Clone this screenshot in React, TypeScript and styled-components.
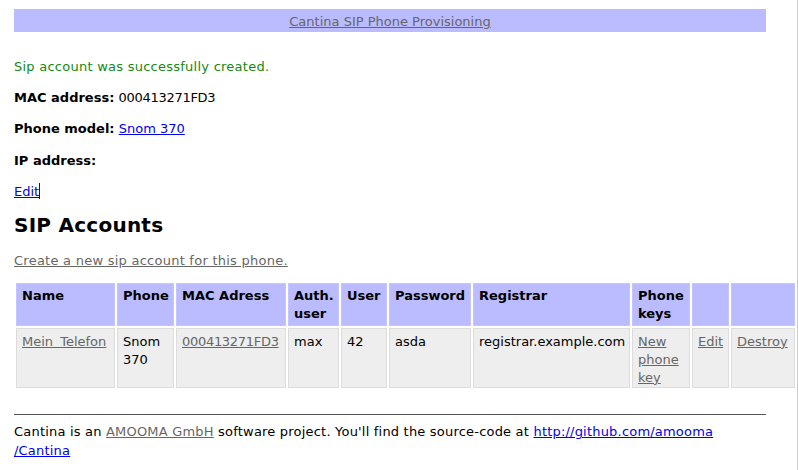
import React from "react";
import styled, { createGlobalStyle } from "styled-components";

const Global = createGlobalStyle`
  html, body { margin: 0; padding: 0; background: #fff; }
  body {
    font-family: "DejaVu Sans", Verdana, sans-serif;
    font-size: 13px;
    line-height: 1.4;
    color: #000;
  }
`;

const Page = styled.div`
  box-sizing: border-box;
  width: 798px;
  min-height: 470px;
  border-right: 1px solid #cccccc;
  padding: 9px 0 0 14px;
`;

const Content = styled.div`
  width: 752px;
`;

const TopBar = styled.div`
  box-sizing: border-box;
  height: 23px;
  padding-top: 4px;
  background: #bbbbff;
  text-align: center;
`;

const GreyLink = styled.a`
  color: #666666;
  text-decoration: underline;
`;

const BlueLink = styled.a`
  color: #0000ee;
  text-decoration: underline;
`;

const Notice = styled.p`
  margin: 26px 0 13px;
  color: #138a13;
  letter-spacing: 0.25px;
`;

const Field = styled.p`
  margin: 13px 0;
`;

const Label = styled.b`
  font-weight: bold;
`;

const Digits = styled.span`
  letter-spacing: -0.28px;
`;

const Caret = styled.span`
  display: inline-block;
  width: 1px;
  height: 16px;
  background: #1a1a40;
  vertical-align: -3px;
`;

const Heading = styled.h2`
  margin: 13px 0 15px;
  font-size: 20px;
  line-height: 23px;
  font-weight: bold;
  letter-spacing: 0.25px;
`;

const Actions = styled.p`
  margin: 0 0 11px;
  letter-spacing: 0.25px;
`;

const Table = styled.table`
  border-collapse: separate;
  border-spacing: 2px;
  table-layout: fixed;
  width: 783px;
  margin: 0;
`;

const Col = styled.col<{ $w: number }>`
  width: ${(p) => p.$w}px;
`;

const Th = styled.th`
  box-sizing: border-box;
  background: #bbbbff;
  border: 1px solid #c4c4ff;
  padding: 3px 5px 1px;
  text-align: left;
  vertical-align: top;
  font-weight: bold;
`;

const Td = styled.td`
  box-sizing: border-box;
  background: #eeeeee;
  border: 1px solid #dddddd;
  padding: 4px 5px 0;
  vertical-align: top;
  height: 60px;
`;

const NameLink = styled(GreyLink)`
  word-spacing: 3px;
`;

const MacLink = styled(GreyLink)`
  letter-spacing: -0.3px;
`;

const Footer = styled.div`
  margin-top: 24px;
  border-top: 1px solid #555555;
  padding-top: 8px;
  line-height: 18.5px;
  letter-spacing: 0.2px;
`;

const widths = [99, 57, 110, 51, 46, 82, 157, 58, 37, 64];

export default function App() {
  return (
    <>
      <Global />
      <Page>
        <Content>
          <TopBar>
            <GreyLink href="#">Cantina SIP Phone Provisioning</GreyLink>
          </TopBar>
          <Notice>Sip account was successfully created.</Notice>
          <Field>
            <Label>MAC address:</Label> <Digits>000413271FD3</Digits>
          </Field>
          <Field>
            <Label>Phone model:</Label> <BlueLink href="#">Snom 370</BlueLink>
          </Field>
          <Field>
            <Label>IP address:</Label>
          </Field>
          <Field>
            <BlueLink href="#">Edit</BlueLink>
            <Caret />
          </Field>
          <Heading>SIP Accounts</Heading>
          <Actions>
            <GreyLink href="#">Create a new sip account for this phone.</GreyLink>
          </Actions>
        </Content>
        <Table>
          <colgroup>
            {widths.map((w, i) => (
              <Col key={i} $w={w} />
            ))}
          </colgroup>
          <thead>
            <tr>
              <Th>Name</Th>
              <Th>Phone</Th>
              <Th>MAC Adress</Th>
              <Th>Auth. user</Th>
              <Th>User</Th>
              <Th>Password</Th>
              <Th>Registrar</Th>
              <Th>Phone keys</Th>
              <Th></Th>
              <Th></Th>
            </tr>
          </thead>
          <tbody>
            <tr>
              <Td>
                <NameLink href="#">Mein Telefon</NameLink>
              </Td>
              <Td>Snom 370</Td>
              <Td>
                <MacLink href="#">000413271FD3</MacLink>
              </Td>
              <Td>max</Td>
              <Td>42</Td>
              <Td>asda</Td>
              <Td>registrar.example.com</Td>
              <Td>
                <GreyLink href="#">New phone key</GreyLink>
              </Td>
              <Td>
                <GreyLink href="#">Edit</GreyLink>
              </Td>
              <Td>
                <GreyLink href="#">Destroy</GreyLink>
              </Td>
            </tr>
          </tbody>
        </Table>
        <Content>
          <Footer>
            Cantina is an <GreyLink href="#">AMOOMA GmbH</GreyLink> software project. You'll find
            the source-code at{" "}
            <BlueLink href="#">
              http://github.com/amooma
              <br />
              /Cantina
            </BlueLink>
          </Footer>
        </Content>
      </Page>
    </>
  );
}
